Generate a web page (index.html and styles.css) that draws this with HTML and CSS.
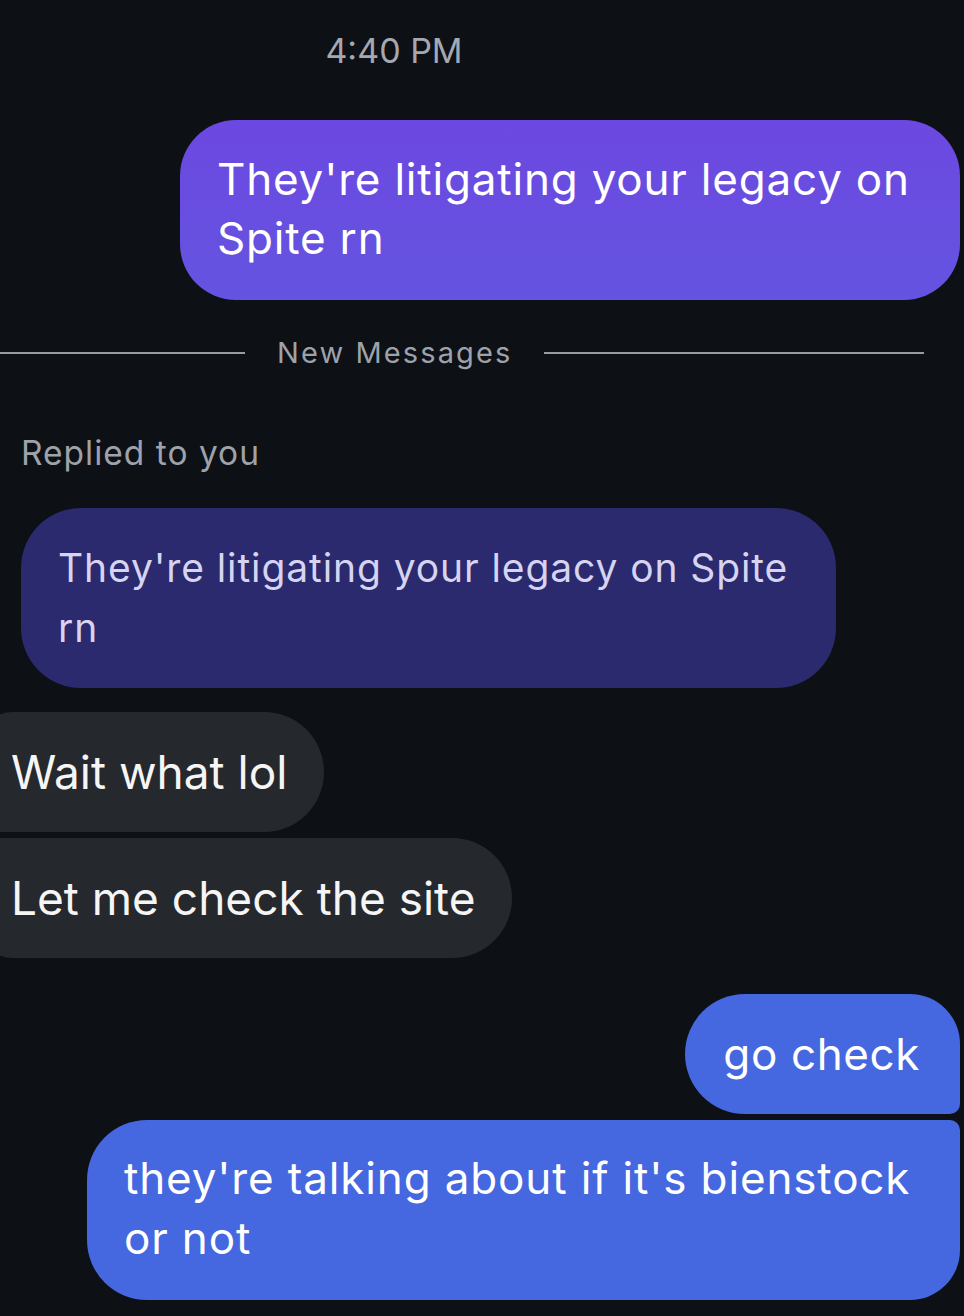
FILE: index.html
```html
<!DOCTYPE html>
<html lang="en">
<head>
<meta charset="utf-8">
<title>Chat</title>
<link rel="stylesheet" href="styles.css">
</head>
<body>
<main class="chat">
  <div class="time">4:40 PM</div>

  <div class="row row-out">
    <div class="bubble bubble-purple bubble-solo w-top">They're litigating your legacy on Spite rn</div>
  </div>

  <div class="divider">
    <span class="line line-left"></span>
    <span class="divider-text">New Messages</span>
    <span class="line line-right"></span>
  </div>

  <div class="replied">Replied to you</div>

  <div class="row row-in">
    <div class="bubble bubble-reply">They're litigating your legacy on Spite rn</div>
  </div>

  <div class="row row-in row-first">
    <div class="bubble bubble-gray in-first">Wait what lol</div>
  </div>
  <div class="row row-in row-next">
    <div class="bubble bubble-gray in-last">Let me check the site</div>
  </div>

  <div class="row row-out row-group">
    <div class="bubble bubble-blue out-first">go check</div>
  </div>
  <div class="row row-out row-next">
    <div class="bubble bubble-blue out-last w-long">they're talking about if it's bienstock or not</div>
  </div>
</main>
</body>
</html>
```

FILE: styles.css
```css
* { box-sizing: border-box; }

html, body {
  margin: 0;
  padding: 0;
  background: #0d1015;
  overflow: hidden;
}

body {
  width: 964px;
  height: 1316px;
  font-family: Inter, "Noto Sans", "Liberation Sans", sans-serif;
  color: #fff;
}

.chat {
  display: flex;
  flex-direction: column;
  padding-top: 31px;
  padding-right: 4px;
}

.time {
  width: 788px;
  text-align: center;
  font-size: 34px;
  line-height: 40px;
  color: #a4a8b0;
}

.row {
  display: flex;
}

.row-out { justify-content: flex-end; margin-top: 49px; }
.row-in { justify-content: flex-start; }

.bubble {
  padding: 30px 38px;
  font-size: 44px;
  line-height: 60px;
  letter-spacing: 0.85px;
  border-radius: 56px;
}

.bubble-purple {
  background: linear-gradient(180deg, #6c48e1 0%, #6454e0 100%);
  color: #fff;
}

.w-top { width: 780px; padding: 30px 30px 32px 37px; line-height: 59px; letter-spacing: 0.8px; }

.divider {
  display: flex;
  align-items: center;
  height: 40px;
  margin-top: 33px;
}

.line {
  display: block;
  flex: none;
  height: 2px;
  background: #979ba3;
}

.line-left { width: 245px; }
.line-right { width: 380px; }

.divider-text {
  margin: 0 32px;
  font-size: 29px;
  line-height: 40px;
  color: #9ea2aa;
  letter-spacing: 2.1px;
}

.replied {
  margin-top: 60px;
  padding-left: 21px;
  font-size: 33.5px;
  line-height: 40px;
  color: #9ea2aa;
  letter-spacing: 1px;
}

.bubble-reply {
  margin-top: 35px;
  margin-left: 21px;
  width: 815px;
  background: #2b2a6e;
  color: #d6d4f0;
  font-size: 39px;
  letter-spacing: 0.9px;
  padding: 30px 30px 30px 37px;
  border-radius: 60px;
}

.row-first { margin-top: 24px; }
.row-next { margin-top: 6px; }
.row-group { margin-top: 36px; }

.bubble-gray {
  background: #25282d;
  color: #f5f5f6;
  font-size: 46px;
  letter-spacing: 0;
  margin-left: -27px;
  padding: 30px 37px 30px 38px;
}

.in-first { border-radius: 40px 60px 60px 12px; }
.in-last { border-radius: 12px 60px 60px 40px; }

.bubble-blue {
  background: #4567e0;
  color: #fff;
}

.out-first { border-radius: 60px 50px 10px 60px; padding: 30px 40px 30px 38px; letter-spacing: 0.6px; }
.out-last { border-radius: 60px 10px 50px 60px; }

.w-long { width: 873px; padding: 28px 30px 32px 37px; }
```
